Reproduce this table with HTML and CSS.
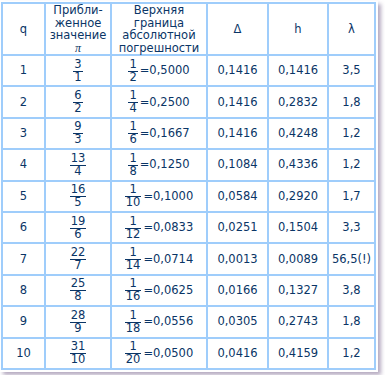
FILE: index.html
```html
<!DOCTYPE html>
<html lang="ru">
<head>
  <meta charset="UTF-8">
  <title>Приближения числа π</title>
  <link rel="stylesheet" href="styles.css">
</head>
<body>
  <div class="sheet">
    <table class="pi">
      <colgroup>
        <col class="c-q">
        <col class="c-val">
        <col class="c-err">
        <col class="c-d">
        <col class="c-h">
        <col class="c-l">
      </colgroup>
      <tr class="head">
        <td>q</td>
        <td>Прибли-<br>женное<br>значение<br><i class="sym">π</i></td>
        <td>Верхняя<br>граница<br>абсолютной<br>погрешности</td>
        <td>Δ</td>
        <td>h</td>
        <td>λ</td>
      </tr>
      <tr>
        <td>1</td>
        <td><span class="frac"><span>3</span><span>1</span></span></td>
        <td><span class="err"><span class="frac"><span>1</span><span>2</span></span><span class="eq">=0,5000</span></span></td>
        <td>0,1416</td><td>0,1416</td><td>3,5</td>
      </tr>
      <tr>
        <td>2</td>
        <td><span class="frac"><span>6</span><span>2</span></span></td>
        <td><span class="err"><span class="frac"><span>1</span><span>4</span></span><span class="eq">=0,2500</span></span></td>
        <td>0,1416</td><td>0,2832</td><td>1,8</td>
      </tr>
      <tr>
        <td>3</td>
        <td><span class="frac"><span>9</span><span>3</span></span></td>
        <td><span class="err"><span class="frac"><span>1</span><span>6</span></span><span class="eq">=0,1667</span></span></td>
        <td>0,1416</td><td>0,4248</td><td>1,2</td>
      </tr>
      <tr>
        <td>4</td>
        <td><span class="frac"><span>13</span><span>4</span></span></td>
        <td><span class="err"><span class="frac"><span>1</span><span>8</span></span><span class="eq">=0,1250</span></span></td>
        <td>0,1084</td><td>0,4336</td><td>1,2</td>
      </tr>
      <tr>
        <td>5</td>
        <td><span class="frac"><span>16</span><span>5</span></span></td>
        <td><span class="err"><span class="frac"><span>1</span><span>10</span></span><span class="eq">=0,1000</span></span></td>
        <td>0,0584</td><td>0,2920</td><td>1,7</td>
      </tr>
      <tr>
        <td>6</td>
        <td><span class="frac"><span>19</span><span>6</span></span></td>
        <td><span class="err"><span class="frac"><span>1</span><span>12</span></span><span class="eq">=0,0833</span></span></td>
        <td>0,0251</td><td>0,1504</td><td>3,3</td>
      </tr>
      <tr>
        <td>7</td>
        <td><span class="frac"><span>22</span><span>7</span></span></td>
        <td><span class="err"><span class="frac"><span>1</span><span>14</span></span><span class="eq">=0,0714</span></span></td>
        <td>0,0013</td><td>0,0089</td><td>56,5(!)</td>
      </tr>
      <tr>
        <td>8</td>
        <td><span class="frac"><span>25</span><span>8</span></span></td>
        <td><span class="err"><span class="frac"><span>1</span><span>16</span></span><span class="eq">=0,0625</span></span></td>
        <td>0,0166</td><td>0,1327</td><td>3,8</td>
      </tr>
      <tr>
        <td>9</td>
        <td><span class="frac"><span>28</span><span>9</span></span></td>
        <td><span class="err"><span class="frac"><span>1</span><span>18</span></span><span class="eq">=0,0556</span></span></td>
        <td>0,0305</td><td>0,2743</td><td>1,8</td>
      </tr>
      <tr>
        <td>10</td>
        <td><span class="frac"><span>31</span><span>10</span></span></td>
        <td><span class="err"><span class="frac"><span>1</span><span>20</span></span><span class="eq">=0,0500</span></span></td>
        <td>0,0416</td><td>0,4159</td><td>1,2</td>
      </tr>
    </table>
  </div>
</body>
</html>
```

FILE: styles.css
```css
body{
	margin: 0;
	background: #fff;
	font-family: "DejaVu Sans", Verdana, sans-serif;
	font-size: 11.5px;
	color: #0a3566;
}
.sheet{
	display: inline-block;
	margin-top: 1px;
	padding: 1px 2px 2px 1px;
	background: #fff;
	box-shadow: 3px 3px 4px rgba(120, 100, 140, 0.55);
}
.pi{
	border-collapse: collapse;
	table-layout: fixed;
	width: 375px;
}
.c-q{ width: 43px; }
.c-val{ width: 66px; }
.c-err{ width: 96px; }
.c-d{ width: 61px; }
.c-h{ width: 60px; }
.c-l{ width: 47px; }
.pi td{
	border: 2px solid #9fcdfb;
	text-align: center;
	vertical-align: middle;
	padding: 0;
	height: 29.4px;
	line-height: 13px;
}
.pi .head td{
	height: 50px;
	line-height: 12.5px;
}
.sym{
	font-family: "Liberation Serif", serif;
	font-size: 12px;
}
.frac{
	display: inline-flex;
	flex-direction: column;
	align-items: center;
	vertical-align: middle;
}
.frac span{
	line-height: 11px;
	padding: 0 1px;
}
.frac span:first-child{
	padding-bottom: 1px;
	border-bottom: 1px solid #0a3566;
	align-self: stretch;
}
.err{
	display: inline-flex;
	align-items: center;
	vertical-align: middle;
}
.eq{
	margin-left: 2px;
}
```
